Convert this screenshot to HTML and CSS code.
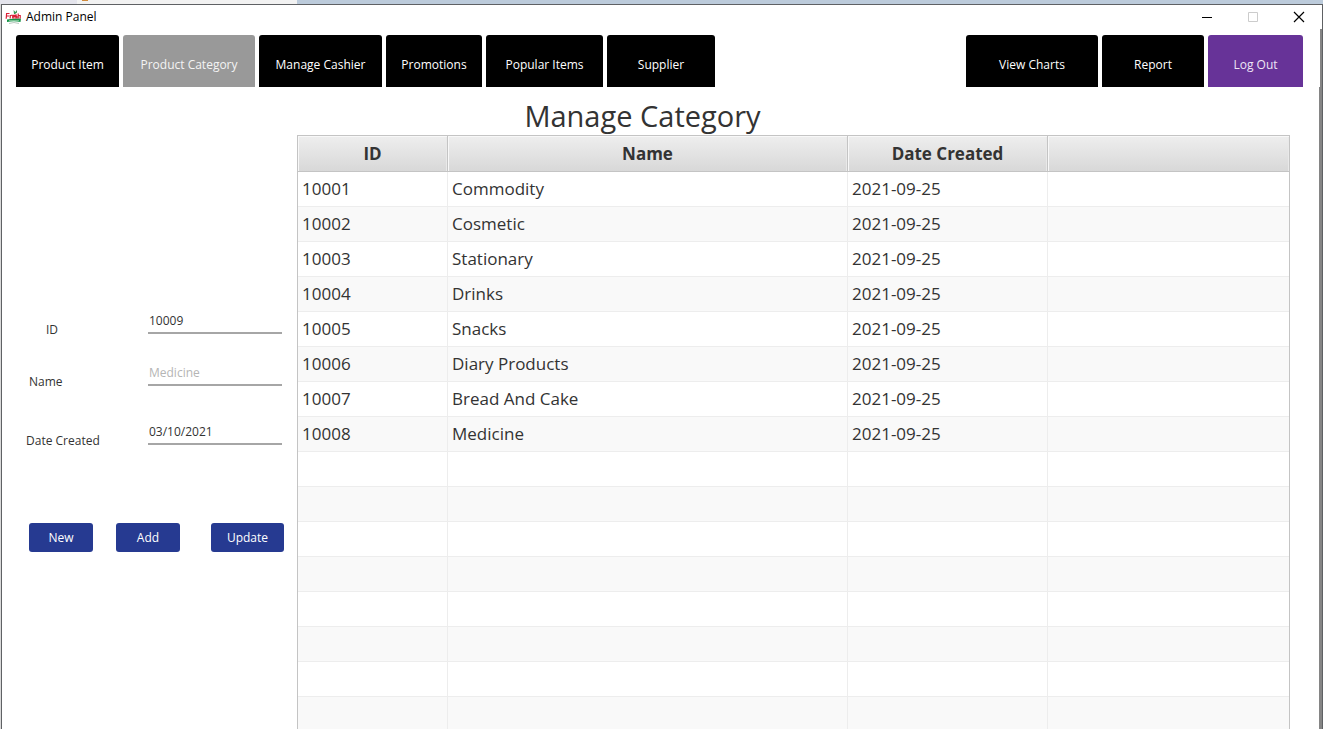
FILE: index.html
```html
<!DOCTYPE html>
<html lang="en">
<head>
<meta charset="utf-8">
<title>Admin Panel</title>
<link rel="stylesheet" href="styles.css">
</head>
<body>
<div class="backdrop"><span class="backdrop-start"></span><span class="backdrop-tab"><i class="backdrop-mark"></i></span></div>
<div class="window">
  <header class="titlebar">
    <svg class="logo" viewBox="0 0 16 16" aria-hidden="true">
      <path d="M9 5L8.500 1L10.500 3L12 1V3.500L10 5Z" fill="#3e9a57"/>
      <path d="M2 10.500Q9 9 16 9.500L15.500 13Q9 11.500 2 13Z" fill="#159447"/>
      <path d="M4 11.500H14" fill="none" stroke="#a5d3b4" stroke-width=".7"/>
      <path d="M4 14.500Q9 12.500 14 14.500" fill="none" stroke="#b9c9bf"/>
      <g fill="none" stroke="#d91f36" stroke-width="1.200"><path d="M1.200 9.800L1.600 4.500H4.500M1.500 7H4M5.200 9.500V6M5.200 7L6.800 6M7.200 7.700H9.200V6.300H7.700V9H9.500M12 6.200H10.400V7.600H11.800V9H10M13.200 4.500V9.500M13.200 6.500H15.200V9.500"/></g>
    </svg>
    <span class="app-name">Admin Panel</span>
    <div class="window-controls">
      <button class="control" aria-label="Minimize"><svg width="12" height="12"><path d="M1 6.500H11" stroke="#000"/></svg></button>
      <button class="control" aria-label="Maximize" disabled><svg width="12" height="12"><path d="M1.500 1.500H10.500V10.500H1.500Z" fill="none" stroke="#ccc"/></svg></button>
      <button class="control" aria-label="Close"><svg width="12" height="12"><path d="M1 1L11 11M11 1L1 11" stroke="#000" stroke-width="1.200"/></svg></button>
    </div>
  </header>
  <nav class="tabs">
    <button class="tab tab-item">Product Item</button>
    <button class="tab tab-category active">Product Category</button>
    <button class="tab tab-cashier">Manage Cashier</button>
    <button class="tab tab-promotions">Promotions</button>
    <button class="tab tab-popular">Popular Items</button>
    <button class="tab tab-supplier">Supplier</button>
    <button class="tab tab-charts">View Charts</button>
    <button class="tab tab-report">Report</button>
    <button class="tab tab-logout">Log Out</button>
  </nav>
  <main class="workspace">
    <form class="editor">
      <div class="field field-id"><label for="cat-id">ID</label><input id="cat-id" value="10009"></div>
      <div class="field field-name"><label for="cat-name">Name</label><input id="cat-name" placeholder="Medicine"></div>
      <div class="field field-date"><label for="cat-date">Date Created</label><input id="cat-date" value="03/10/2021"></div>
      <div class="actions">
        <button type="button" class="action">New</button>
        <button type="button" class="action">Add</button>
        <button type="button" class="action action-update">Update</button>
      </div>
    </form>
    <section class="listing">
      <h1>Manage Category</h1>
      <table>
        <colgroup><col class="col-id"><col class="col-name"><col class="col-date"><col></colgroup>
        <thead><tr><th>ID</th><th>Name</th><th>Date Created</th><th></th></tr></thead>
        <tbody>
          <tr><td>10001</td><td>Commodity</td><td>2021-09-25</td><td></td></tr>
          <tr><td>10002</td><td>Cosmetic</td><td>2021-09-25</td><td></td></tr>
          <tr><td>10003</td><td>Stationary</td><td>2021-09-25</td><td></td></tr>
          <tr><td>10004</td><td>Drinks</td><td>2021-09-25</td><td></td></tr>
          <tr><td>10005</td><td>Snacks</td><td>2021-09-25</td><td></td></tr>
          <tr><td>10006</td><td>Diary Products</td><td>2021-09-25</td><td></td></tr>
          <tr><td>10007</td><td>Bread And Cake</td><td>2021-09-25</td><td></td></tr>
          <tr><td>10008</td><td>Medicine</td><td>2021-09-25</td><td></td></tr>
          <tr><td></td><td></td><td></td><td></td></tr>
          <tr><td></td><td></td><td></td><td></td></tr>
          <tr><td></td><td></td><td></td><td></td></tr>
          <tr><td></td><td></td><td></td><td></td></tr>
          <tr><td></td><td></td><td></td><td></td></tr>
          <tr><td></td><td></td><td></td><td></td></tr>
          <tr><td></td><td></td><td></td><td></td></tr>
          <tr><td></td><td></td><td></td><td></td></tr>
        </tbody>
      </table>
    </section>
  </main>
</div>
</body>
</html>
```
FILE: styles.css
```css
* { box-sizing: border-box; }
body {
  margin: 0;
  height: 100vh;
  overflow: hidden;
  display: flex;
  flex-direction: column;
  background: #d9d9d9;
  color: #333;
  font: 12px/16px "Open Sans", "Noto Sans", sans-serif;
}
button, input { font: inherit; color: inherit; }
button { border: 0; padding: 0; }

.backdrop { display: flex; flex: none; height: 4px; background: #bccbdb; }
.backdrop-start { width: 77px; background: #e4e4ec; }
.backdrop-tab { width: 220px; padding-left: 5px; background: #f2f2f2; }
.backdrop-mark { display: block; width: 6px; height: 1px; background: #d08a3c; }

.window {
  flex: 1;
  min-height: 0;
  display: flex;
  flex-direction: column;
  margin-left: 1px;
  border: 1px solid #5f6164;
  border-bottom: 0;
  background: #fff;
}
.titlebar { display: flex; align-items: center; flex: none; height: 24px; padding-left: 3px; }
.logo { width: 16px; height: 16px; }
.app-name { margin-left: 5px; color: #000; }
.window-controls { display: flex; margin-left: auto; }
.control { display: grid; place-items: center; width: 46px; height: 24px; background: none; }

.tabs { display: flex; align-items: flex-end; gap: 4px; flex: none; height: 58px; padding: 0 17px 0 14px; border-right: 2px solid #858585; }
.tab { height: 52px; padding-top: 8px; border-radius: 3px 3px 0 0; background: #000; color: #fff; }
.tab-item { width: 103px; }
.tab-category { width: 132px; }
.tab-cashier { width: 123px; }
.tab-promotions { width: 96px; }
.tab-popular { width: 117px; }
.tab-supplier { width: 108px; }
.tab-charts { width: 132px; margin-left: auto; }
.tab-report { width: 102px; }
.tab-logout { width: 95px; background: #673398; color: #eee6f5; }
.tab.active { background: #999; color: #f4f4f4; }

.workspace {
  flex: 1;
  min-height: 0;
  overflow: hidden;
  display: grid;
  grid-template-columns: 295px 1fr;
  padding-right: 29px;
  border-right: 3px solid #858585;
}
.editor { padding: 223px 13px 0 24px; }
.field { display: grid; grid-template-columns: 122px 134px; align-items: end; height: 28px; margin-bottom: 24px; }
.field-id label { padding-left: 20px; }
.field-name label { padding-left: 3px; }
.field-date { margin-top: 31px; }
.field input {
  width: 100%;
  height: 24px;
  margin-bottom: 4px;
  padding: 0 1px 2px;
  border: 0;
  border-bottom: 2px solid #a6a6a6;
  background: none;
  outline: 0;
}
.field input::placeholder { color: #b5b5b5; opacity: 1; }
.actions { display: flex; gap: 23px; margin-top: 74px; padding-left: 3px; }
.action { width: 64px; height: 29px; border-radius: 3px; background: #263a91; color: #fff; }
.action-update { width: 73px; margin-left: 8px; }

h1 { margin: 0 302px 0 0; padding-top: 10px; font-size: 29px; line-height: 38px; font-weight: 400; text-align: center; }
table { width: 100%; table-layout: fixed; border-collapse: separate; border-spacing: 0; border: 1px solid #c4c4c4; font-size: 17px; line-height: 24px; }
.col-id { width: 150px; }
.col-name { width: 400px; }
.col-date { width: 200px; }
th {
  height: 36px;
  padding: 0;
  border-right: 1px solid #c4c4c4;
  border-bottom: 1px solid #c4c4c4;
  background: linear-gradient(#eee, #d8d8d8);
  box-shadow: inset 1px 1px #f8f8f8, inset -1px 0 #e9e9e9;
  font-weight: 700;
}
td { height: 35px; padding: 0 4px; border-right: 1px solid #ededed; border-bottom: 1px solid #ededed; }
th:last-child, td:last-child { border-right: 0; }
tbody tr:nth-child(even) { background: #f9f9f9; }
```
